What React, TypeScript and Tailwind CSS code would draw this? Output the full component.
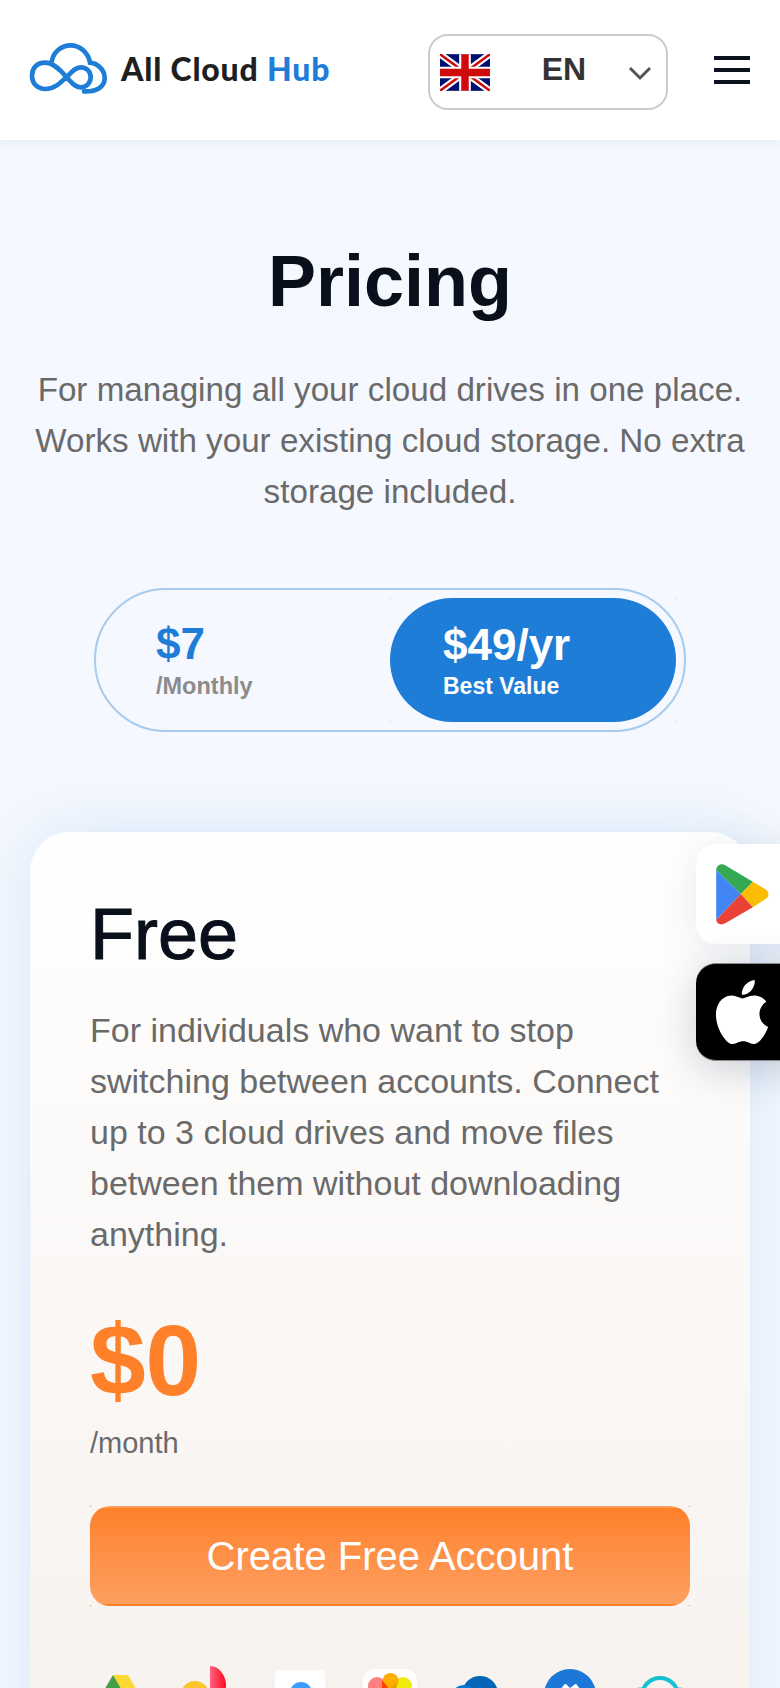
import { SiApple } from "react-icons/si";

const sans = "font-['Liberation_Sans',Arial,sans-serif]";

function Logo() {
  return (
    <svg width="100" height="70" viewBox="0 0 300 210" fill="none" stroke="#1e7dd7" strokeWidth="14" strokeLinecap="round" className="ml-[-10px] mt-[-10px] shrink-0">
      <path d="M140 142 C120 118 100 98 75 98 C50 98 36 115 36 137 C36 160 52 177 76 177 C104 177 122 158 145 136 C158 122 168 112 182 112 C200 112 212 125 212 142 C212 160 198 172 182 172 C165 172 155 158 140 142" />
      <path d="M95 95 C100 65 125 46 152 46 C180 46 205 68 210 98 C238 102 254 122 254 145 C254 170 230 186 192 184" />
    </svg>
  );
}

function Flag() {
  return (
    <svg width="50" height="37" viewBox="0 0 60 44" className="shrink-0">
      <rect width="60" height="44" fill="#00106e" />
      <path d="M0 0 L60 44 M60 0 L0 44" stroke="#fff" strokeWidth="8" />
      <path d="M0 0 L60 44 M60 0 L0 44" stroke="#cf0a0a" strokeWidth="3" />
      <path d="M30 0 V44 M0 22 H60" stroke="#fff" strokeWidth="14" />
      <path d="M30 0 V44 M0 22 H60" stroke="#cf0a0a" strokeWidth="9" />
    </svg>
  );
}

function PlayIcon() {
  return (
    <svg width="53" height="61" viewBox="228 160 158 183">
      <path d="M228 178 L302 250 L228 328 Z" fill="#4285f4" />
      <path d="M228 178 C230 163 243 157 255 164 L338 213 L302 250 Z" fill="#34a853" />
      <path d="M338 213 L376 236 C388 243 388 258 376 265 L338 290 L302 250 Z" fill="#fbbc04" />
      <path d="M302 250 L338 290 L255 338 C243 345 230 340 228 328 Z" fill="#ea4335" />
    </svg>
  );
}

function Dot({ className }: { className: string }) {
  return <span className={`absolute h-px w-px ${className}`} />;
}

function DriveIcon() {
  return (
    <svg width="60" height="60" viewBox="0 0 60 60">
      <polygon points="23,10 3,44 13,56 33,22" fill="#43a047" />
      <polygon points="23,10 38,10 58,44 43,44" fill="#fdd835" />
      <polygon points="13,56 50,56 58,44 21,44" fill="#1e88e5" />
    </svg>
  );
}

function PhotosIcon() {
  return (
    <svg width="60" height="60" viewBox="0 0 60 60">
      <defs>
        <linearGradient id="redHalf" x1="0" x2="1" y1="0" y2="0">
          <stop offset="0" stopColor="#ff6480" />
          <stop offset="1" stopColor="#ff0a1e" />
        </linearGradient>
      </defs>
      <circle cx="15" cy="30" r="14" fill="#fdc52a" />
      <path d="M30 1 C40 1 46 12 46 20 C46 30 38 35 30 36 Z" fill="url(#redHalf)" />
    </svg>
  );
}

function BoxCloudIcon() {
  return (
    <svg width="60" height="60" viewBox="0 0 60 60">
      <rect x="5" y="5" width="50" height="50" rx="4" fill="#fff" />
      <ellipse cx="21" cy="27" rx="6" ry="4" fill="#7cc3f7" />
      <circle cx="31" cy="28" r="11" fill="#3b9cff" />
    </svg>
  );
}

function FlowerIcon() {
  return (
    <svg width="60" height="60" viewBox="0 0 60 60">
      <rect x="3" y="4" width="54" height="54" rx="12" fill="#fff" />
      <circle cx="17" cy="21" r="9" fill="#ff8080" />
      <circle cx="43" cy="21" r="9" fill="#f0ec0a" />
      <circle cx="30.5" cy="16" r="8" fill="#ffad00" />
      <polygon points="22,15 22,30 34,30" fill="#ff4000" />
      <polygon points="30,24 36,18 37,30" fill="#e5a000" />
    </svg>
  );
}

function OneDriveIcon() {
  return (
    <svg width="60" height="60" viewBox="0 0 60 60">
      <circle cx="30" cy="29" r="18" fill="#0364b8" />
      <circle cx="14" cy="34" r="14" fill="#0078d4" />
    </svg>
  );
}

function MegaIcon() {
  return (
    <svg width="60" height="60" viewBox="0 0 60 60">
      <circle cx="30" cy="30" r="26" fill="#1c78d6" />
      <path d="M14 32 L24 20 Q25 18 27 20 L30 23 L34 20 Q36 18 37 20 L46 32 Z" fill="#fff" />
    </svg>
  );
}

function CyanIcon() {
  return (
    <svg width="60" height="60" viewBox="0 0 60 60">
      <circle cx="30" cy="31" r="18" fill="none" stroke="#15c0d0" strokeWidth="4" />
      <circle cx="30" cy="34" r="11" fill="#15c0d0" />
      <circle cx="10" cy="32" r="8" fill="none" stroke="#15c0d0" strokeWidth="3" />
      <circle cx="50" cy="32" r="8" fill="none" stroke="#15c0d0" strokeWidth="3" />
    </svg>
  );
}

export default function App() {
  return (
    <div className={`relative h-[1688px] w-[780px] overflow-hidden bg-[#f5f8fe] ${sans}`}>
      <header className="relative z-10 flex h-[140px] items-center justify-between bg-white pl-[30px] pr-[30px] shadow-[0_2px_10px_rgba(30,60,120,0.08)]">
        <div className="flex items-center">
          <Logo />
          <span className="ml-[1px] mt-[-3px] font-['Lato',sans-serif] text-[32px] font-black tracking-[0.8px] text-[#1f1f1f]">
            All Cloud <span className="text-[#1e7dd7]">Hub</span>
          </span>
        </div>
        <div className="flex items-center">
          <div className="mt-[4px] flex h-[76px] w-[240px] items-center rounded-[20px] border-2 border-[#cccccc] pl-[10px] pr-[14px]">
            <Flag />
            <span className="mt-[-6px] flex-1 pl-[10px] text-center text-[32px] font-bold text-[#333333]">EN</span>
            <svg width="24" height="16" viewBox="0 0 24 16" fill="none" stroke="#555555" strokeWidth="3" className="mt-[2px]">
              <path d="M2 3 L12 13 L22 3" />
            </svg>
          </div>
          <div className="ml-[46px] flex w-[36px] flex-col gap-[8px]">
            <span className="h-[4px] bg-[#0a0f1c]" />
            <span className="h-[4px] bg-[#0a0f1c]" />
            <span className="h-[4px] bg-[#0a0f1c]" />
          </div>
        </div>
      </header>

      <main className="px-[30px] pt-[98px]">
        <h1 className="text-center text-[72px] font-bold leading-[1.2] text-[#0a0f1c]">Pricing</h1>
        <p className="mt-[40px] text-center text-[33.2px] leading-[51px] text-[#6a6a6a]">
          For managing all your cloud drives in one place. Works with your existing cloud storage. No extra storage included.
        </p>

        <div className="mx-auto mt-[71px] flex h-[144px] w-[592px] rounded-[72px] border-2 border-[#a5cbf0] p-[8px]">
          <div className="flex w-[286px] flex-col justify-center pb-[2px] pl-[52px]">
            <span className="text-[44px] font-bold leading-[1.2] text-[#1e7dd7]">$7</span>
            <span className="text-[23.5px] font-bold leading-[1.3] text-[#8c8c8c]">/Monthly</span>
          </div>
          <div className="relative w-[286px]">
            <Dot className="left-0 top-0 bg-[#a5cbf0]" />
            <Dot className="right-0 top-0 bg-[#a5cbf0]" />
            <Dot className="bottom-0 left-0 bg-[#a5cbf0]" />
            <Dot className="bottom-0 right-0 bg-[#a5cbf0]" />
            <div className="flex h-full flex-col justify-center rounded-[62px] bg-[#1e7dd7] pl-[53px]">
              <span className="text-[44px] font-bold leading-[1.2] text-white">$49/yr</span>
              <span className="text-[23px] font-bold leading-[1.3] text-white">Best Value</span>
            </div>
          </div>
        </div>

        <section className="mt-[100px] rounded-t-[40px] bg-linear-to-b from-white to-[#f6f1ed] px-[60px] pb-[60px] pt-[59px] shadow-[0_0_60px_rgba(30,125,215,0.14)]">
          <h2 className="text-[72px] leading-[1.2] text-[#0a0f1c] [-webkit-text-stroke:1px_#0a0f1c]">Free</h2>
          <p className="mt-[27px] text-[34px] leading-[51px] text-[#6a6a6a]">
            For individuals who want to stop switching between accounts. Connect up to 3 cloud drives and move files between them without downloading anything.
          </p>
          <div className="mt-[40px] text-[100px] font-bold leading-[1.2] text-[#fe812a]">$0</div>
          <div className="mt-[3px] text-[29px] leading-[1.4] text-[#6a6a6a]">/month</div>
          <div className="relative mt-[43px]">
            <Dot className="left-0 top-0 bg-[#fe812a]" />
            <Dot className="right-0 top-0 bg-[#fe812a]" />
            <Dot className="bottom-0 left-0 bg-[#fe812a]" />
            <Dot className="bottom-0 right-0 bg-[#fe812a]" />
            <div className="flex h-[100px] items-center justify-center rounded-[20px] border-2 border-transparent bg-linear-to-b from-[#fe812a] to-[#fe9f5f] text-[40px] text-white">
              Create Free Account
            </div>
          </div>
          <div className="mt-[59px] flex justify-between">
            <DriveIcon />
            <PhotosIcon />
            <BoxCloudIcon />
            <FlowerIcon />
            <OneDriveIcon />
            <MegaIcon />
            <CyanIcon />
          </div>
        </section>
      </main>

      <div className="absolute left-[696px] top-[844px] flex h-[100px] w-[120px] items-center rounded-[20px] bg-white pl-[20px] shadow-[0_4px_40px_rgba(30,60,120,0.10)]">
        <PlayIcon />
      </div>
      <div className="absolute left-[696px] top-[963px] flex h-[98px] w-[120px] items-center rounded-[20px] border-y border-[#888888] bg-black pl-[14px] text-white shadow-[0_8px_40px_rgba(20,40,80,0.22)]">
        <SiApple size={64} />
      </div>
    </div>
  );
}
